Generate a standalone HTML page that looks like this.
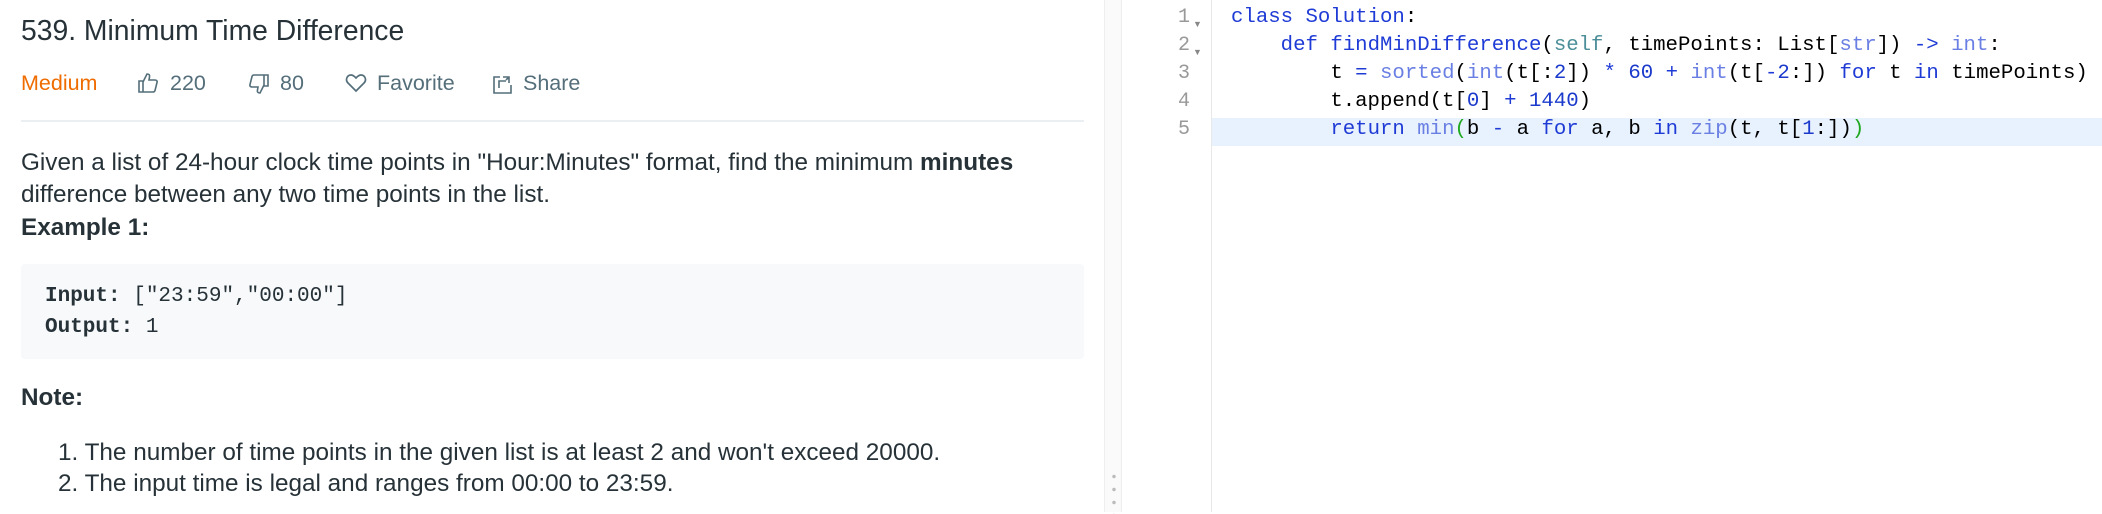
<!DOCTYPE html>
<html><head><meta charset="utf-8"><style>
*{margin:0;padding:0;box-sizing:border-box}
body{width:2102px;height:512px;background:#fff;position:relative;overflow:hidden;font-family:"Liberation Sans",sans-serif;color:#263238}
.a{position:absolute;white-space:nowrap}
.meta{font-size:21.5px;color:#546e7a;line-height:24px}
.mono{font-family:"Liberation Mono",monospace}
p.t{font-size:24.3px;line-height:32px}
.code{font-family:"Liberation Mono",monospace;font-size:20.7px;line-height:28px;color:#000}
.k{color:#1f3bd6}.b{color:#6a7fe3}.s{color:#4c8f99}.n{color:#1b3acc}.g{color:#1fa81f}
.ln{font-family:"Liberation Mono",monospace;font-size:20px;color:#999;line-height:28px;text-align:right;width:40px}
</style></head><body>
<div class="a" style="left:21px;top:14px;font-size:28.3px;color:#263238">539. Minimum Time Difference</div>
<div class="a meta" style="left:21px;top:71px;color:#ef6c00">Medium</div>
<svg class="a" style="left:137px;top:72px" width="22" height="22" viewBox="0 0 22 22" fill="none" stroke="#546e7a" stroke-width="1.6"><path d="M2 9h4v11H2zM6 10l4-8c2 0 3 1 2.5 3L12 8h6c1.5 0 2.5 1 2 2.5l-2 8c-.3 1-1 1.5-2 1.5H6"/></svg>
<div class="a meta" style="left:170px;top:71px">220</div>
<svg class="a" style="left:248px;top:73px" width="22" height="22" viewBox="0 0 22 22" fill="none" stroke="#546e7a" stroke-width="1.6"><path d="M16 2h4v11h-4zM16 12l-4 8c-2 0-3-1-2.5-3L10 14H4c-1.5 0-2.5-1-2-2.5l2-8C4.3 2.5 5 2 6 2h10"/></svg>
<div class="a meta" style="left:280px;top:71px">80</div>
<svg class="a" style="left:345px;top:73px" width="22" height="20" viewBox="0 0 22 20" fill="none" stroke="#546e7a" stroke-width="1.7"><path d="M11 18L3 10C0 7 2 2 6 2c2.5 0 4 2 5 3 1-1 2.5-3 5-3 4 0 6 5 3 8z"/></svg>
<div class="a meta" style="left:377px;top:71px">Favorite</div>
<svg class="a" style="left:492px;top:73px" width="22" height="22" viewBox="0 0 22 22" fill="none" stroke="#546e7a" stroke-width="1.6"><path d="M8 4H2v16h17v-8M7 15V8h7M11 4h6v6M17 4l-3 3"/></svg>
<div class="a meta" style="left:523px;top:71px">Share</div>
<div class="a" style="left:21px;top:120px;width:1063px;height:2px;background:#eceff1"></div>
<p class="a t" style="left:21px;top:147px">Given a list of 24-hour clock time points in "Hour:Minutes" format, find the minimum <b>minutes</b></p>
<p class="a t" style="left:21px;top:179px">difference between any two time points in the list.</p>
<p class="a t" style="left:21px;top:212px;font-weight:bold">Example 1:</p>
<div class="a" style="left:21px;top:264px;width:1063px;height:95px;background:#f7f9fa;border-radius:4px"></div>
<div class="a mono" style="left:45px;top:284px;font-size:21px;line-height:26px"><b>Input:</b> ["23:59","00:00"]</div>
<div class="a mono" style="left:45px;top:315px;font-size:21px;line-height:26px"><b>Output:</b> 1</div>
<p class="a t" style="left:21px;top:382px;font-weight:bold">Note:</p>
<p class="a t" style="left:58px;top:437px">1. The number of time points in the given list is at least 2 and won't exceed 20000.</p>
<p class="a t" style="left:58px;top:468px">2. The input time is legal and ranges from 00:00 to 23:59.</p>

<div class="a" style="left:1104px;top:0;width:18px;height:512px;background:#fafafa;border-left:1px solid #eee;border-right:1px solid #eee"></div>
<div class="a" style="left:1112px;top:470px;width:4px;height:44px;background:radial-gradient(circle,#bbb 1.5px,transparent 2px) 0 0/4px 13px"></div>
<div class="a" style="left:1211px;top:0;width:1px;height:512px;background:#e8e8e8"></div>
<div class="a" style="left:1212px;top:118px;width:890px;height:28px;background:#e8f2fe"></div>
<div class="a ln" style="left:1150px;top:4px">1<br>2<br>3<br>4<br>5</div>
<div class="a" style="left:1193px;top:10px;font-size:9px;color:#888;line-height:28px">▼<br>▼</div>
<div class="a code" style="left:1231px;top:4px;white-space:pre"><span class="k">class</span> <span class="k">Solution</span>:
    <span class="k">def</span> <span class="k">findMinDifference</span>(<span class="s">self</span>, timePoints: List[<span class="b">str</span>]) <span class="k">-&gt;</span> <span class="b">int</span>:
        t <span class="k">=</span> <span class="b">sorted</span>(<span class="b">int</span>(t[:<span class="n">2</span>]) <span class="k">*</span> <span class="n">60</span> <span class="k">+</span> <span class="b">int</span>(t[<span class="k">-</span><span class="n">2</span>:]) <span class="k">for</span> t <span class="k">in</span> timePoints)
        t.append(t[<span class="n">0</span>] <span class="k">+</span> <span class="n">1440</span>)
        <span class="k">return</span> <span class="b">min</span><span class="g">(</span>b <span class="k">-</span> a <span class="k">for</span> a, b <span class="k">in</span> <span class="b">zip</span>(t, t[<span class="n">1</span>:])<span class="g">)</span></div>
</body></html>
